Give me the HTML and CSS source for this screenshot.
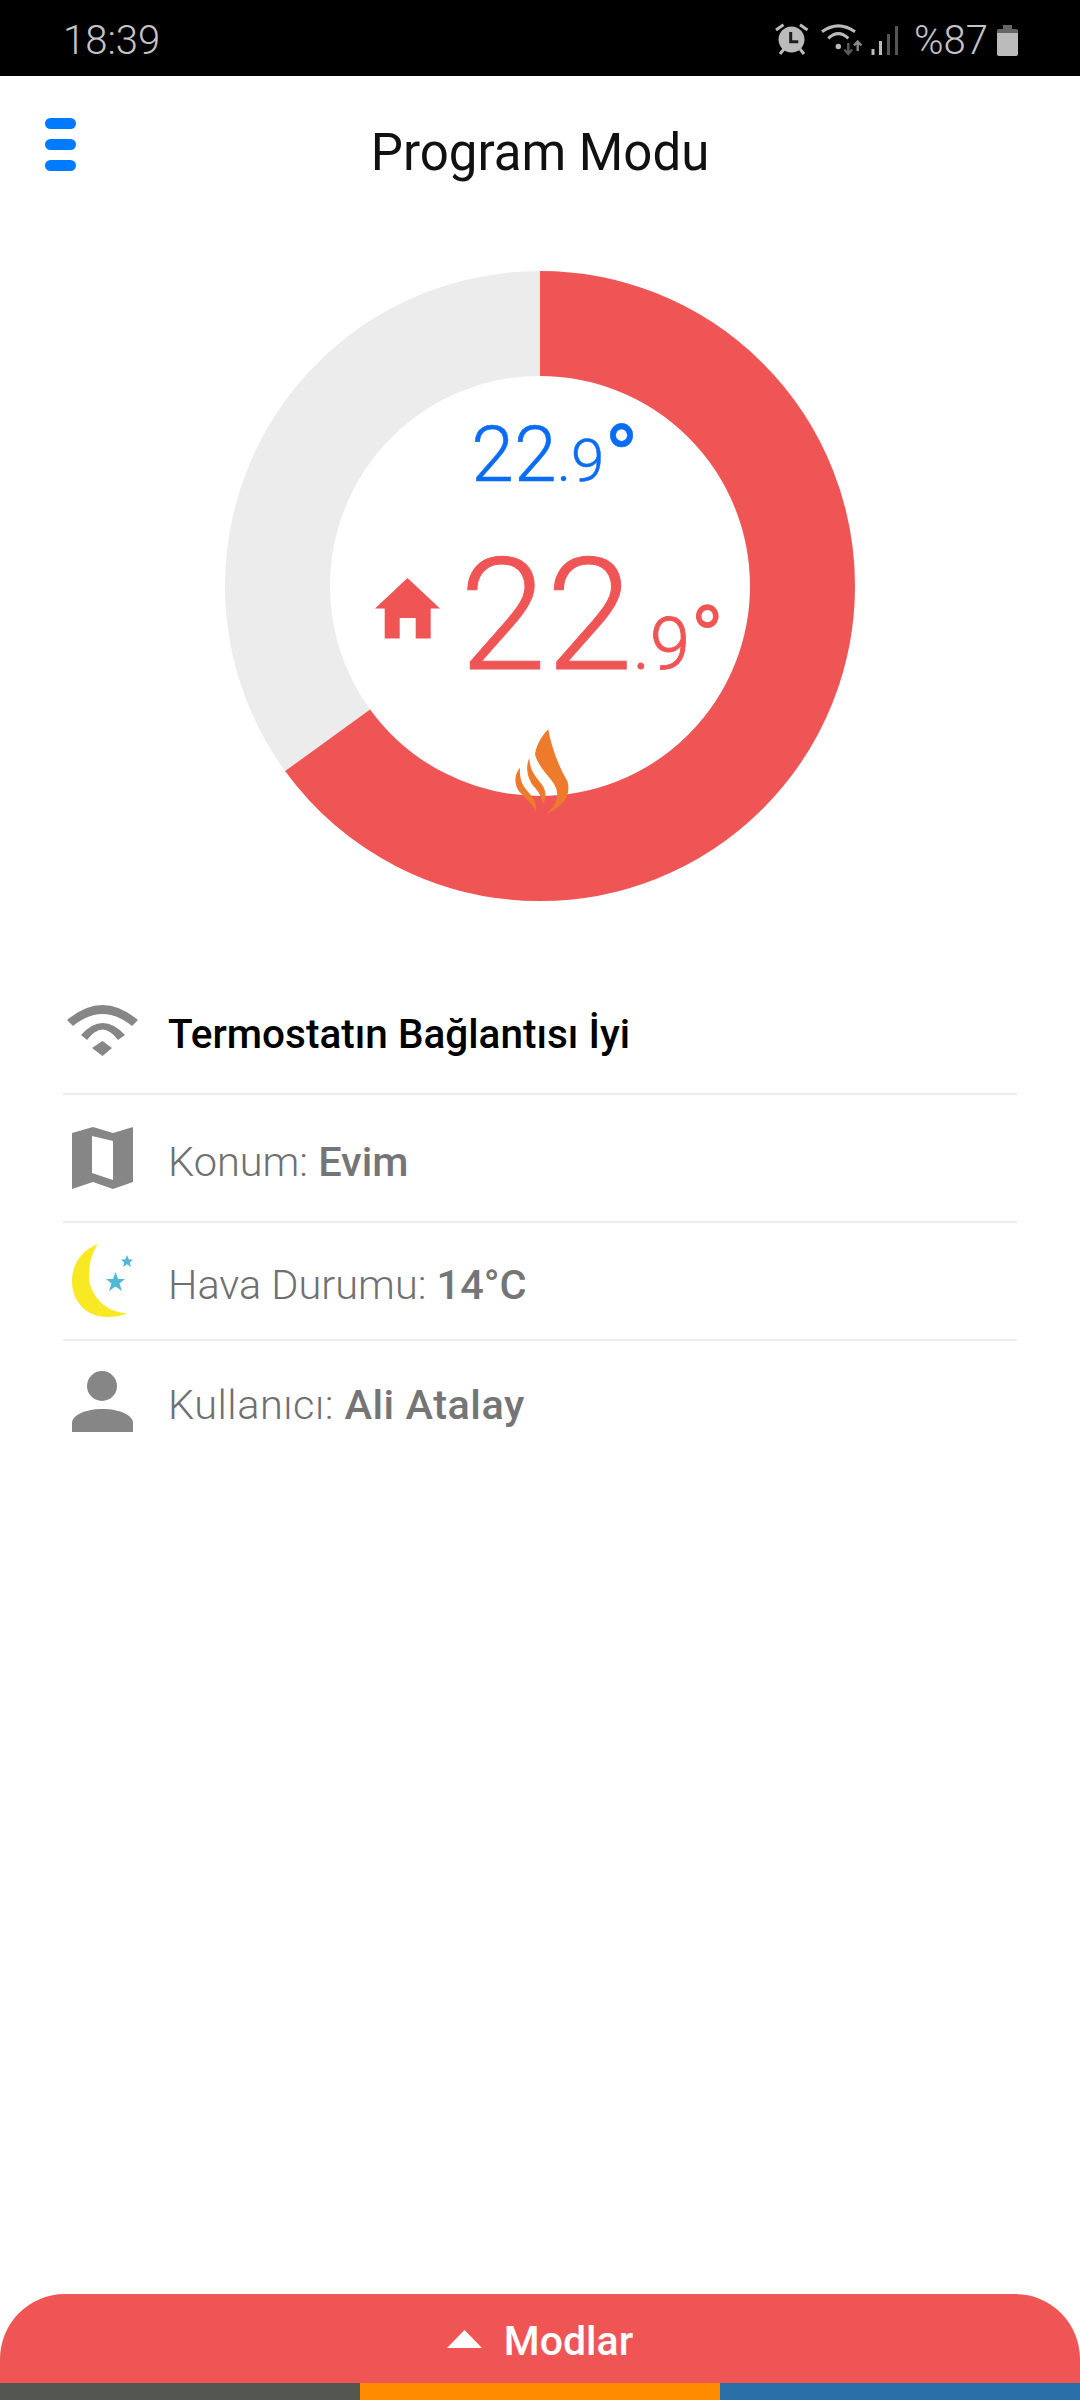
FILE: index.html
```html
<!DOCTYPE html>
<html>
<head>
  <meta charset="UTF-8">
  <title>Program Modu</title>
  <link rel="stylesheet" href="styles.css">
</head>
<body>
  <!-- Phone status bar -->
  <div class="statusBar">
    <span class="clock">18:39</span>
    <div class="statusIcons">
      <svg class="alarmIcon" width="34" height="34" viewBox="0 0 34 34">
        <circle cx="16.5" cy="16.5" r="13" fill="#bbb"/>
        <path d="M1 7 8.5 1.7M25 1.7 32.5 7M5 31l4-5M25 26l4 5" stroke="#bbb" stroke-width="3" fill="none"/>
        <path d="M15.7 9v9.7h7.6" stroke="#1c1c1c" stroke-width="3" fill="none"/>
      </svg>
      <svg class="wifiSmall" width="44" height="34" viewBox="0 0 44 34">
        <path d="M2 8.7Q18.3-3 35 8.7M8.3 15.3Q18.3 6 28.3 15.3" stroke="#bbb" stroke-width="3" fill="none"/>
        <circle cx="18.3" cy="23.5" r="2.7" fill="#bbb"/>
        <path d="M28.3 20v10M24.5 26.5l3.8 4.5 3.8-4.500" stroke="#5a5a5a" stroke-width="2.400" fill="none"/>
        <path d="M37.700 28V19M34 22.500l3.700-4 3.700 4" stroke="#8a8a8a" stroke-width="2.400" fill="none"/>
      </svg>
      <svg class="signalIcon" width="30" height="32" viewBox="0 0 30 32">
        <rect x="1.500" y="25" width="3" height="6" fill="#bbb"/>
        <rect x="9" y="17" width="3" height="14" fill="#bbb"/>
        <rect x="17" y="10" width="3" height="21" fill="#555"/>
        <rect x="25" y="2" width="3" height="29" fill="#555"/>
      </svg>
      <span class="percent">%87</span>
      <div class="battery"></div>
    </div>
  </div>

  <!-- Page title -->
  <div class="topBar">
    <div class="menuBtn"><i></i><i></i><i></i></div>
    <h1>Program Modu</h1>
  </div>

  <!-- Round gauge -->
  <div class="gauge">
    <svg class="ring" width="630" height="630" viewBox="0 0 630 630">
      <circle cx="315" cy="315" r="262.5" fill="none" stroke="#ececec" stroke-width="105"/>
      <circle cx="315" cy="315" r="262.5" fill="none" stroke="#f05556" stroke-width="105" pathLength="100" stroke-dasharray="65 35" transform="rotate(-90 315 315)"/>
    </svg>
    <div class="readings">
      <div class="target">22<small>.9</small><b>°</b></div>
      <div class="current">
        <svg class="homeIcon" width="66" height="61" viewBox="0 0 66 61">
          <path d="M32.500 0 65 30.500H55.700V60.500H40.700V40H24.700V60.500H9.700V30.500H0Z" fill="#f05556"/>
        </svg>
        <div class="currentTemp">22<small>.9</small><b>°</b></div>
      </div>
    </div>
    <svg class="flame" width="110" height="110" viewBox="0 0 330 330">
      <path fill="#ee7a2b" d="M175 55C182 100 205 165 232 210C242 240 232 285 170 306C205 280 210 245 190 215C170 190 142 160 135 130C140 100 155 75 175 55Z"/>
      <path fill="#ee7a2b" d="M118 140C105 170 112 205 135 230C150 248 156 262 158 280C170 262 170 240 155 220C135 195 118 175 118 140Z"/>
      <path fill="#ee7a2b" d="M90 170C72 190 72 220 88 242C108 262 128 280 138 302C142 280 130 260 112 240C95 220 88 200 90 170Z"/>
    </svg>
  </div>

  <!-- Info list -->
  <div class="infoList">
    <div class="infoRow rowWifi">
      <svg width="71" height="51" viewBox="0 0 71 51" fill="#868686">
        <path d="M0 15Q35.500-15 71 15L65 21Q35.500-3 6 21Z"/>
        <path d="M14 30Q35.500 6 58 30L51 35Q35.500 14 20 35Z"/>
        <path d="M25 43 35.500 36 45 43 35.500 51Z"/>
      </svg>
      <span class="strong">Termostatın Bağlantısı İyi</span>
    </div>
    <div class="infoRow rowMap">
      <svg width="61" height="62" viewBox="0 0 61 62" fill="#868686" fill-rule="evenodd">
        <path d="M0 6 21 0 41 6 61 0V55L41 62 21 55 0 62ZM20 9V46L41 53V14Z"/>
      </svg>
      <span>Konum: <b>Evim</b></span>
    </div>
    <div class="infoRow rowWeather">
      <svg width="62" height="74" viewBox="0 0 62 74">
        <path fill="#f9e824" d="M26 0C10 6 0 20 0 37C0 58 15 73 35 73C42 73 50 72 55 69C35 69 17 52 17 32C17 20 20 8 26 0Z"/>
        <path fill="#4db8d8" d="M43.500 28 46 35 53 35 47.500 39.500 50 47 43.500 42.500 37 47 39.500 39.500 34 35 41 35Z"/>
        <path fill="#4db8d8" d="M55 11 56.800 15.500 61 15.500 57.800 18.500 59 23 55 20.300 51 23 52.200 18.500 49 15.500 53.200 15.500Z"/>
      </svg>
      <span>Hava Durumu: <b>14°C</b></span>
    </div>
    <div class="infoRow rowUser">
      <svg width="61" height="61" viewBox="0 0 61 61" fill="#868686">
        <circle cx="30" cy="15" r="15"/>
        <path d="M0 61V52C0 44 14 38 30.500 38C47 38 61 44 61 52V61Z"/>
      </svg>
      <span>Kullanıcı: <b>Ali Atalay</b></span>
    </div>
  </div>

  <!-- Modes drawer handle -->
  <div class="footer">
    <div class="modesBtn">
      <svg width="35" height="18" viewBox="0 0 35 18"><path d="M17.500 0 35 18H0Z" fill="#fff"/></svg>
      <span>Modlar</span>
    </div>
    <div class="stripes"><i class="grey"></i><i class="orange"></i><i class="blue"></i></div>
  </div>
</body>
</html>
```

FILE: styles.css
```css
body {
  font-family: Roboto, "Noto Sans", sans-serif;
  margin: 0;
  padding: 0;
  background: #fff;
  height: 2400px;
  display: flex;
  flex-direction: column;
  overflow: hidden;
}
/* Status bar */
.statusBar {
  background: #000;
  color: #c4c4c4;
  height: 76px;
  flex: none;
  box-sizing: border-box;
  display: flex;
  align-items: center;
  justify-content: space-between;
  padding: 4px 62px 0 63px;
  font-size: 40px;
  font-weight: 300;
}
.statusIcons {
  display: flex;
  align-items: center;
}
.wifiSmall { margin-left: 11px; }
.signalIcon { margin-left: 6px; }
.percent { margin-left: 14px; }
.battery {
  width: 21px;
  height: 27px;
  margin: 4px 0 0 9px;
  background: linear-gradient(#666 4px, #bbb 4px);
  border-radius: 2px;
  position: relative;
}
.battery::before {
  content: "";
  position: absolute;
  top: -4px;
  left: 6px;
  width: 9px;
  height: 4px;
  background: #666;
}
/* Title */
.topBar {
  display: grid;
  grid-template-columns: 1fr auto 1fr;
  height: 195px;
  flex: none;
  box-sizing: border-box;
  padding: 42px 45px 0;
}
.menuBtn {
  display: flex;
  flex-direction: column;
  gap: 10px;
}
.menuBtn i {
  display: block;
  width: 31px;
  height: 11px;
  border-radius: 6px;
  background: #007aff;
}
.topBar h1 {
  margin: 2px 0 0;
  font-size: 51px;
  font-weight: 400;
  line-height: 66px;
  color: #111;
}
/* Gauge */
.gauge {
  width: 630px;
  height: 630px;
  margin: 0 auto;
  flex: none;
  position: relative;
}
.ring { display: block; }
.readings {
  position: absolute;
  top: 0;
  left: 0;
  right: 0;
  display: flex;
  flex-direction: column;
  align-items: center;
  font-weight: 300;
}
.target {
  color: #0a6cf5;
  font-size: 77px;
  line-height: 100px;
  margin-top: 134px;
  margin-left: 30px;
  white-space: nowrap;
  -webkit-text-stroke: 0.5px #0a6cf5;
}
.target small { font-size: 60px; }
.target b {
  font-size: 92px;
  font-weight: 400;
  line-height: 0;
  vertical-align: -10px;
}
.current {
  display: flex;
  align-items: center;
  color: #f05556;
  margin-top: 10px;
  margin-left: 19px;
}
.homeIcon { margin: 0 19px 44px 0; }
.currentTemp {
  font-size: 156px;
  line-height: 190px;
  white-space: nowrap;
  -webkit-text-stroke: 1px #f05556;
}
.currentTemp small { font-size: 72px; }
.currentTemp b {
  font-size: 92px;
  font-weight: 400;
  line-height: 0;
  vertical-align: -3px;
  -webkit-text-stroke: 0;
}
.flame {
  position: absolute;
  left: 265px;
  top: 440px;
}
/* Info rows */
.infoList {
  margin: 67px 63px 0;
  flex: none;
}
.infoRow {
  display: grid;
  grid-template-columns: 79px 1fr;
  column-gap: 26px;
  align-items: center;
  justify-items: start;
  box-sizing: border-box;
  border-bottom: 2px solid #ececec;
  font-size: 41.500px;
  font-weight: 300;
  color: #707070;
}
.infoRow svg {
  justify-self: center;
  display: block;
}
.infoRow span { padding-top: 6px; }
.infoRow b {
  font-weight: 500;
  color: #757575;
}
.infoRow .strong {
  font-size: 40.500px;
  font-weight: 500;
  color: #000;
}
.rowWifi { height: 127px; }
.rowMap { height: 128px; }
.rowWeather { height: 118px; }
.rowUser {
  height: 120px;
  border-bottom: 0;
  letter-spacing: 0.5px;
}
/* Bottom handle */
.footer {
  margin-top: auto;
  flex: none;
}
.modesBtn {
  background: #f05556;
  height: 89px;
  border-radius: 65px 65px 0 0;
  color: #fff;
  font-size: 41px;
  font-weight: 500;
  display: flex;
  align-items: center;
  justify-content: center;
  gap: 22px;
}
.modesBtn span { padding-top: 5px; }
.stripes {
  display: grid;
  grid-template-columns: repeat(3, 1fr);
  height: 17px;
}
.stripes i { display: block; }
.grey { background: #545650; }
.orange { background: #ff8c00; }
.blue { background: #2a6fa8; }
```
